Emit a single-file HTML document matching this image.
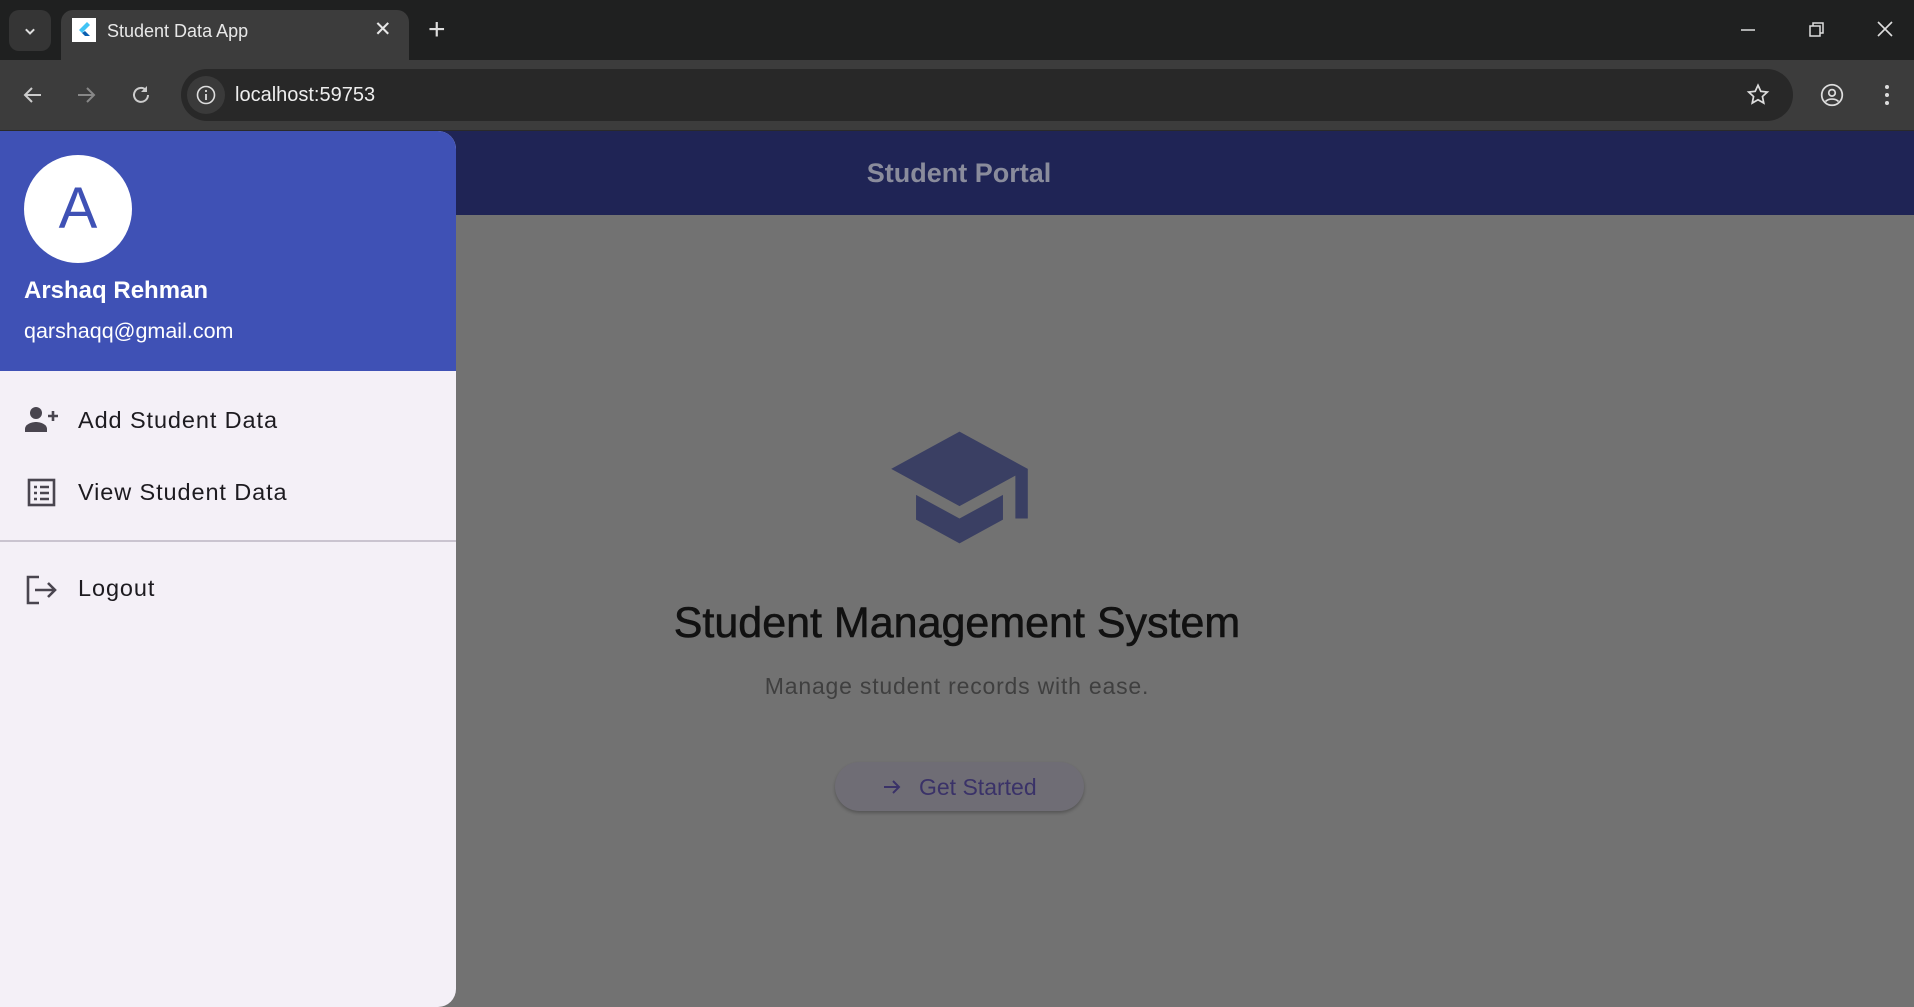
<!DOCTYPE html>
<html><head><meta charset="utf-8"><style>
*{margin:0;padding:0;box-sizing:border-box}
body{width:1914px;height:1007px;overflow:hidden;background:#202124;font-family:"Liberation Sans",Roboto,sans-serif;position:relative}
.abs{position:absolute}
</style></head><body>
<!-- tab strip -->
<div class="abs" style="left:0;top:0;width:1914px;height:60px;background:#1f2020"></div>
<div class="abs" style="left:9px;top:10px;width:42px;height:41px;border-radius:10px;background:#353535"></div>
<svg class="abs" style="left:20px;top:21px" width="20" height="20" viewBox="0 0 24 24"><path d="M7 10l5 5 5-5" fill="none" stroke="#ddd" stroke-width="2.4"/></svg>
<div class="abs" style="left:61px;top:10px;width:348px;height:55px;border-radius:12px 12px 0 0;background:#3c3c3c"></div>
<div class="abs" style="left:72px;top:18px;width:24px;height:24px;background:#fff"></div>
<svg class="abs" style="left:74px;top:20px" width="20" height="20" viewBox="0 0 20 20"><path d="M13 2L5 10l3 3L16 5z" fill="#41c4f5"/><path d="M8 13l3 3h5l-5-5z" fill="#0a5fb0"/></svg>
<div class="abs" style="left:107px;top:21px;color:#e8e8e8;font-size:18px">Student Data App</div>
<div class="abs" style="left:374px;top:17px;color:#e8e8e8;font-size:21px">✕</div>
<div class="abs" style="left:428px;top:13px;color:#ddd;font-size:30px;font-weight:300">+</div>
<svg class="abs" style="left:1738px;top:20px" width="20" height="20"><path d="M3 10h14" stroke="#ddd" stroke-width="1.5"/></svg>
<svg class="abs" style="left:1806px;top:20px" width="20" height="20"><rect x="4" y="6" width="10" height="10" fill="none" stroke="#ddd" stroke-width="1.5"/><path d="M7 6V3h10v10h-3" fill="none" stroke="#ddd" stroke-width="1.5"/></svg>
<svg class="abs" style="left:1875px;top:19px" width="20" height="20"><path d="M3 3l14 14M17 3L3 17" stroke="#ddd" stroke-width="1.6"/></svg>
<!-- toolbar -->
<div class="abs" style="left:0;top:60px;width:1914px;height:71px;background:#3c3c3c"></div>
<svg class="abs" style="left:21px;top:83px" width="24" height="24" viewBox="0 0 24 24"><path d="M20 12H5M11 5l-7 7 7 7" fill="none" stroke="#ccc" stroke-width="2"/></svg>
<svg class="abs" style="left:74px;top:83px" width="24" height="24" viewBox="0 0 24 24"><path d="M4 12h15M13 5l7 7-7 7" fill="none" stroke="#888" stroke-width="2"/></svg>
<svg class="abs" style="left:129px;top:83px" width="24" height="24" viewBox="0 0 24 24"><path d="M19 12a7 7 0 1 1-2-5" fill="none" stroke="#ccc" stroke-width="2"/><path d="M18 3v6h-6" fill="#ccc"/></svg>
<div class="abs" style="left:181px;top:69px;width:1612px;height:52px;border-radius:26px;background:#282828"></div>
<div class="abs" style="left:187px;top:76px;width:38px;height:38px;border-radius:19px;background:#3a3a3a"></div>
<svg class="abs" style="left:195px;top:84px" width="22" height="22" viewBox="0 0 22 22"><circle cx="11" cy="11" r="8.5" fill="none" stroke="#ddd" stroke-width="1.6"/><path d="M11 10v6" stroke="#ddd" stroke-width="1.8"/><circle cx="11" cy="7" r="1.1" fill="#ddd"/></svg>
<div class="abs" style="left:235px;top:84px;color:#eee;font-size:20px">localhost:59753</div>
<svg class="abs" style="left:1745px;top:82px" width="26" height="26" viewBox="0 0 24 24"><path d="M12 3l2.6 5.6 6 .7-4.5 4.1 1.2 6L12 16.4 6.7 19.4l1.2-6L3.4 9.3l6-.7z" fill="none" stroke="#ddd" stroke-width="1.6"/></svg>
<svg class="abs" style="left:1819px;top:82px" width="26" height="26" viewBox="0 0 24 24"><circle cx="12" cy="12" r="9.5" fill="none" stroke="#ddd" stroke-width="1.6"/><circle cx="12" cy="10" r="3" fill="none" stroke="#ddd" stroke-width="1.6"/><path d="M6 18c3-3 9-3 12 0" fill="none" stroke="#ddd" stroke-width="1.6"/></svg>
<svg class="abs" style="left:1877px;top:82px" width="20" height="26"><circle cx="10" cy="5" r="2" fill="#ddd"/><circle cx="10" cy="13" r="2" fill="#ddd"/><circle cx="10" cy="21" r="2" fill="#ddd"/></svg>
<div class="abs" style="left:0;top:130px;width:1914px;height:1px;background:#2a2a2a"></div>
<!-- page -->
<div class="abs" style="left:0;top:131px;width:1914px;height:876px;background:#727272"></div>
<div class="abs" style="left:0;top:131px;width:1914px;height:84px;background:#1f2455"></div>
<div class="abs" style="left:0;top:158px;width:1914px;text-align:center;color:#8a8c9c;font-size:27px;font-weight:bold;padding-left:4px">Student Portal</div>
<svg class="abs" style="left:885px;top:413px" width="149" height="149" viewBox="0 0 24 24"><path d="M5 13.18v4L12 21l7-3.82v-4L12 17l-7-3.82zM12 3L1 9l11 6 9-4.91V17h2V9L12 3z" fill="#3a3f63"/></svg>
<div class="abs" style="left:0;top:599px;width:1914px;text-align:center;color:#111;font-size:43px;-webkit-text-stroke:0.6px #111">Student Management System</div>
<div class="abs" style="left:0;top:673px;width:1914px;text-align:center;color:#3f3f3f;font-size:23px;letter-spacing:0.8px">Manage student records with ease.</div>
<div class="abs" style="left:835px;top:762px;width:249px;height:49px;border-radius:25px;background:#6f6d75;box-shadow:0 2px 3px rgba(0,0,0,.25)"></div>
<svg class="abs" style="left:880px;top:775px" width="24" height="24" viewBox="0 0 24 24"><path d="M4 12h15M13 6l6 6-6 6" fill="none" stroke="#3a3268" stroke-width="2"/></svg>
<div class="abs" style="left:919px;top:774px;color:#3a3268;font-size:23px">Get Started</div>
<!-- drawer -->
<div class="abs" style="left:0;top:131px;width:456px;height:876px;background:#f4f0f7;border-radius:0 18px 18px 0;overflow:hidden">
<div style="height:240px;background:#3f51b5"></div>
</div>
<div class="abs" style="left:24px;top:155px;width:108px;height:108px;border-radius:54px;background:#fff;color:#3f51b5;font-size:58px;text-align:center;line-height:108px">A</div>
<div class="abs" style="left:24px;top:277px;color:#fff;font-size:24px;font-weight:bold">Arshaq Rehman</div>
<div class="abs" style="left:24px;top:319px;color:#fff;font-size:21.5px">qarshaqq@gmail.com</div>
<svg class="abs" style="left:24px;top:405px" width="36" height="30" viewBox="0 0 36 30"><circle cx="12" cy="8" r="6" fill="#49454f"/><path d="M1 27v-3c0-5 7-7 11-7s11 2 11 7v3z" fill="#49454f"/><path d="M29 6v10M24 11h10" stroke="#49454f" stroke-width="2.6"/></svg>
<div class="abs" style="left:78px;top:407px;color:#1d1b20;font-size:23.5px;letter-spacing:0.9px">Add Student Data</div>
<svg class="abs" style="left:27px;top:478px" width="30" height="30" viewBox="0 0 30 30"><rect x="2" y="2" width="25" height="25" fill="none" stroke="#49454f" stroke-width="2.6"/><path d="M7 9h3M7 15h3M7 21h3M13 9h9M13 15h9M13 21h9" stroke="#49454f" stroke-width="2.4"/></svg>
<div class="abs" style="left:78px;top:479px;color:#1d1b20;font-size:23.5px;letter-spacing:0.9px">View Student Data</div>
<div class="abs" style="left:0;top:540px;width:456px;height:2px;background:#cac4d0"></div>
<svg class="abs" style="left:26px;top:575px" width="32" height="30" viewBox="0 0 32 30"><path d="M13 2H2v26h11" fill="none" stroke="#49454f" stroke-width="2.6"/><path d="M9 15h20M22 8l7 7-7 7" fill="none" stroke="#49454f" stroke-width="2.6"/></svg>
<div class="abs" style="left:78px;top:575px;color:#1d1b20;font-size:23.5px;letter-spacing:0.9px">Logout</div>
</body></html>
